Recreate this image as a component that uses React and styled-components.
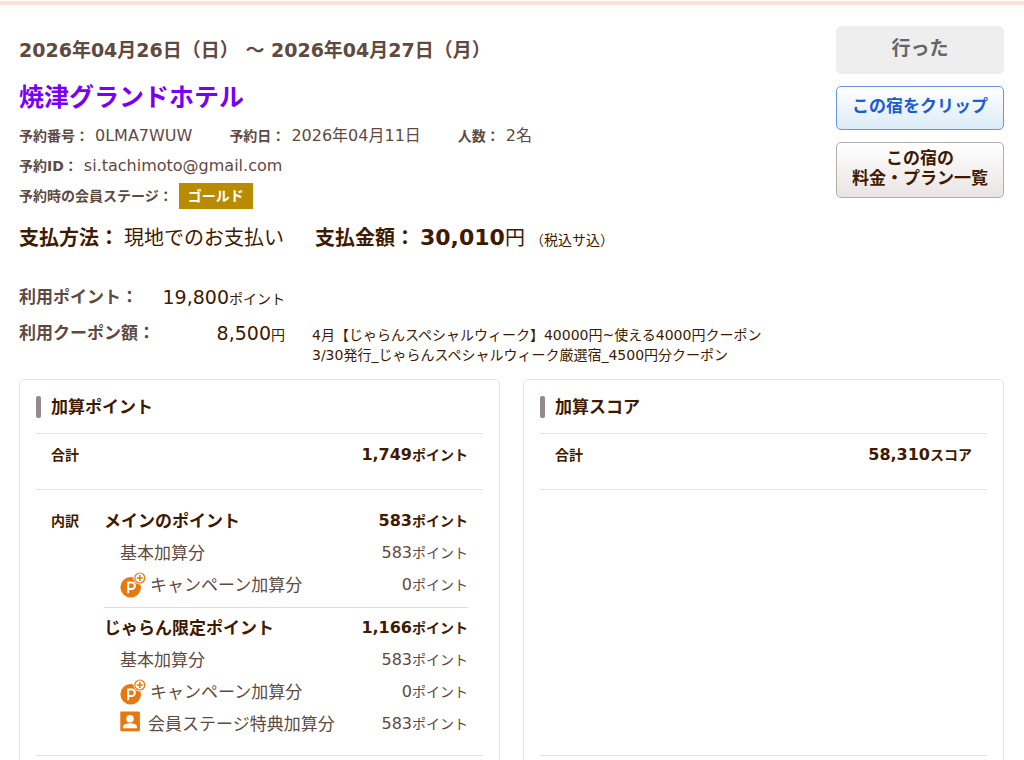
import React from "react";
import styled, { createGlobalStyle, css } from "styled-components";

const pointGroups = [
  {
    name: "メインのポイント",
    total: "583",
    rows: [
      { label: "基本加算分", value: "583" },
      { label: "キャンペーン加算分", value: "0", icon: "campaign" }
    ]
  },
  {
    name: "じゃらん限定ポイント",
    total: "1,166",
    rows: [
      { label: "基本加算分", value: "583" },
      { label: "キャンペーン加算分", value: "0", icon: "campaign" },
      { label: "会員ステージ特典加算分", value: "583", icon: "member" }
    ]
  }
];

const CampaignIcon = () => (
  <Icon viewBox="0 0 26 26" $width={26} aria-hidden="true">
    <circle cx="10.7" cy="15.3" r="10.3" fill="#e87710" />
    <path
      d="M8.2 21.2V10.6h3.5a3.2 3.2 0 0 1 0 6.4H8.2"
      fill="none"
      stroke="#fff"
      strokeWidth="2"
    />
    <circle cx="19.8" cy="6" r="6.4" fill="#fff" />
    <circle cx="19.8" cy="6" r="5" fill="#fff" stroke="#e87710" strokeWidth="1.2" />
    <path d="M19.8 3v6M16.8 6h6" stroke="#e87710" strokeWidth="1.5" />
  </Icon>
);

const MemberIcon = () => (
  <Icon viewBox="0 0 24 26" $width={24} aria-hidden="true">
    <rect x="0.3" y="0.6" width="19.6" height="19.6" rx="1" fill="#e87710" />
    <circle cx="10" cy="7.8" r="3.8" fill="#fff" />
    <path d="M3 17.2v-1.4c0-2.4 4.4-3.5 7-3.5s7 1.1 7 3.5v1.4z" fill="#fff" />
  </Icon>
);

const icons = { campaign: <CampaignIcon />, member: <MemberIcon /> };

const App = () => (
  <>
    <GlobalStyle />
    <TopLine />
    <Main>
      <Reservation>
        <Summary>
          <StayDate>2026年04月26日（日） ～ 2026年04月27日（月）</StayDate>
          <HotelName>
            <a href="#hotel">焼津グランドホテル</a>
          </HotelName>
          <InfoList>
            <InfoRow>
              <Info>
                <dt>予約番号：</dt>
                <dd>0LMA7WUW</dd>
              </Info>
              <Info>
                <dt>予約日：</dt>
                <dd>2026年04月11日</dd>
              </Info>
              <Info>
                <dt>人数：</dt>
                <dd>2名</dd>
              </Info>
            </InfoRow>
            <InfoRow>
              <Info>
                <dt>予約ID：</dt>
                <dd>si.tachimoto@gmail.com</dd>
              </Info>
            </InfoRow>
            <InfoRow>
              <Info>
                <dt>予約時の会員ステージ：</dt>
                <StageBadge>ゴールド</StageBadge>
              </Info>
            </InfoRow>
          </InfoList>
          <PaymentList>
            <Payment>
              <dt>支払方法：</dt>
              <dd>現地でのお支払い</dd>
            </Payment>
            <Payment>
              <dt>支払金額：</dt>
              <dd>
                <strong>30,010</strong>円<small>（税込サ込）</small>
              </dd>
            </Payment>
          </PaymentList>
        </Summary>
        <Actions>
          <ActionButton disabled>行った</ActionButton>
          <ActionButton $variant="clip">この宿をクリップ</ActionButton>
          <ActionButton $variant="plan">
            この宿の
            <br />
            料金・プラン一覧
          </ActionButton>
        </Actions>
      </Reservation>

      <Usage>
        <UsageRow>
          <dt>利用ポイント：</dt>
          <UsageValue>
            19,800<Unit>ポイント</Unit>
          </UsageValue>
        </UsageRow>
        <UsageRow>
          <dt>利用クーポン額：</dt>
          <UsageValue>
            8,500<Unit>円</Unit>
          </UsageValue>
          <CouponNames>
            4月【じゃらんスペシャルウィーク】40000円~使える4000円クーポン
            <br />
            3/30発行_じゃらんスペシャルウィーク厳選宿_4500円分クーポン
          </CouponNames>
        </UsageRow>
      </Usage>

      <Cards>
        <Card>
          <CardTitle>加算ポイント</CardTitle>
          <TotalRow>
            <span>合計</span>
            <Amount $bold>
              1,749<Unit>ポイント</Unit>
            </Amount>
          </TotalRow>
          <Breakdown>
            <BreakdownLabel>内訳</BreakdownLabel>
            <Groups>
              {pointGroups.map(group => (
                <Group key={group.name}>
                  <tbody>
                    <tr>
                      <GroupName scope="row">{group.name}</GroupName>
                      <Amount as="td" $bold>
                        {group.total}
                        <Unit>ポイント</Unit>
                      </Amount>
                    </tr>
                    {group.rows.map(row => (
                      <tr key={row.label}>
                        <ItemName scope="row">
                          <ItemLabel>
                            {icons[row.icon]}
                            {row.label}
                          </ItemLabel>
                        </ItemName>
                        <Amount as="td">
                          {row.value}
                          <Unit>ポイント</Unit>
                        </Amount>
                      </tr>
                    ))}
                  </tbody>
                </Group>
              ))}
            </Groups>
          </Breakdown>
        </Card>
        <Card>
          <CardTitle>加算スコア</CardTitle>
          <TotalRow>
            <span>合計</span>
            <Amount $bold>
              58,310<Unit>スコア</Unit>
            </Amount>
          </TotalRow>
          <Breakdown />
        </Card>
      </Cards>
    </Main>
  </>
);

export default App;

const GlobalStyle = createGlobalStyle`
  * {
    box-sizing: border-box;
  }
  html {
    scrollbar-width: none;
  }
  body {
    margin: 0;
    background: #fff;
    color: #401a00;
    font-family: "DejaVu Sans", "Noto Sans CJK JP", sans-serif;
    font-size: 16px;
  }
  h1, h2, h3, p, dl, dd {
    margin: 0;
  }
`;

const TopLine = styled.div`
  height: 5px;
  border-top: 1px solid #fff;
  background: #ffe2d6;
`;

const Main = styled.main`
  padding: 21px 20px 32px 19px;
`;

//Reservation
const Reservation = styled.section`
  display: flex;
  justify-content: space-between;
  gap: 24px;
`;

const Summary = styled.div`
  flex: 1;
  padding-top: 10px;
`;

const StayDate = styled.p`
  color: #5f4a42;
  font-size: 19px;
  font-weight: 700;
  line-height: 28px;
`;

const HotelName = styled.h1`
  margin-top: 14px;
  font-size: 25px;
  line-height: 40px;
  a {
    color: #7a00f5;
    text-decoration: none;
  }
`;

const InfoList = styled.div`
  margin-top: 3px;
  color: #5f4a42;
`;

const InfoRow = styled.dl`
  display: flex;
  gap: 37px;
  line-height: 30px;
`;

const Info = styled.div`
  display: flex;
  align-items: baseline;
  gap: 6px;
  dt {
    font-size: 14px;
    font-weight: 700;
  }
`;

const StageBadge = styled.dd`
  padding: 0 9px;
  background: #b88b00;
  color: #fff;
  font-size: 14px;
  font-weight: 700;
  line-height: 26px;
`;

const PaymentList = styled.dl`
  display: flex;
  gap: 31px;
  margin-top: 12px;
  font-size: 20px;
  line-height: 30px;
`;

const Payment = styled.div`
  display: flex;
  align-items: baseline;
  gap: 5px;
  dt {
    font-weight: 700;
  }
  strong {
    font-size: 22px;
  }
  small {
    margin-left: 5px;
    font-size: 14px;
  }
`;

//Buttons
const Actions = styled.div`
  display: flex;
  flex-direction: column;
  gap: 12px;
  width: 168px;
`;

const variants = {
  clip: css`
    height: 44px;
    border-color: #6496e6;
    background: linear-gradient(#fff, #dcebf7);
    color: #1c5bd0;
  `,
  plan: css`
    height: 56px;
    border-color: #b4adaa;
    background: linear-gradient(#fff, #e9e4e3);
    color: #401a00;
  `
};

const ActionButton = styled.button`
  height: 48px;
  padding: 0 0 4px;
  border: 1px solid #eee;
  border-radius: 5px;
  background: #eee;
  color: #666;
  font-family: inherit;
  font-size: 17px;
  font-weight: 700;
  line-height: 20px;
  cursor: pointer;
  &:disabled {
    font-size: 19px;
    cursor: default;
  }
  ${({ $variant }) => variants[$variant]}
`;

//Used points and coupons
const Usage = styled.dl`
  margin-top: 24px;
`;

const UsageRow = styled.div`
  display: grid;
  grid-template-columns: 130px 136px 1fr;
  line-height: 36px;
  dt {
    color: #5f4a42;
    font-size: 17px;
    font-weight: 700;
    white-space: nowrap;
  }
`;

const UsageValue = styled.dd`
  font-size: 19px;
  text-align: right;
`;

const Unit = styled.span`
  font-size: 14px;
  line-height: 1;
`;

const CouponNames = styled.dd`
  padding: 10px 0 0 27px;
  font-size: 14px;
  line-height: 20px;
`;

//Cards
const Cards = styled.div`
  display: flex;
  gap: 23px;
  margin-top: 14px;
`;

const Card = styled.section`
  display: flex;
  flex: 1;
  flex-direction: column;
  padding: 16px;
  border: 1px solid #e6e4e2;
  border-radius: 5px;
`;

const CardTitle = styled.h2`
  display: flex;
  align-items: center;
  gap: 10px;
  padding-bottom: 15px;
  border-bottom: 1px solid #e6e4e2;
  font-size: 17px;
  line-height: 22px;
  &::before {
    content: "";
    width: 5px;
    height: 22px;
    border-radius: 2px;
    background: #948b88;
  }
`;

const TotalRow = styled.div`
  display: flex;
  justify-content: space-between;
  padding: 0 15px 13px;
  border-bottom: 1px solid #e6e4e2;
  font-size: 14px;
  font-weight: 700;
  line-height: 42px;
`;

const Amount = styled.span`
  padding: 0;
  color: ${({ $bold }) => ($bold ? "#401a00" : "#5f4a42")};
  font-size: 16px;
  font-weight: ${({ $bold }) => ($bold ? 700 : 400)};
  text-align: right;
  white-space: nowrap;
`;

const Breakdown = styled.div`
  display: flex;
  flex: 1;
  gap: 25px;
  padding: 15px;
  border-bottom: 1px solid #e6e4e2;
  line-height: 32px;
`;

const BreakdownLabel = styled.h3`
  font-size: 14px;
`;

const Groups = styled.div`
  flex: 1;
`;

const Group = styled.table`
  width: 100%;
  border-spacing: 0;
  tr {
    height: 32px;
  }
  & + & {
    margin-top: 6px;
    padding-top: 4px;
    border-top: 1px solid #dcdcdc;
  }
`;

const GroupName = styled.th`
  padding: 0;
  font-size: 17px;
  text-align: left;
`;

const ItemName = styled.th`
  padding: 0 0 0 16px;
  color: #5f4a42;
  font-size: 17px;
  font-weight: 400;
  text-align: left;
`;

const ItemLabel = styled.span`
  display: flex;
  align-items: center;
  gap: 4px;
`;

const Icon = styled.svg`
  width: ${({ $width }) => $width}px;
  height: 26px;
  flex-shrink: 0;
`;
